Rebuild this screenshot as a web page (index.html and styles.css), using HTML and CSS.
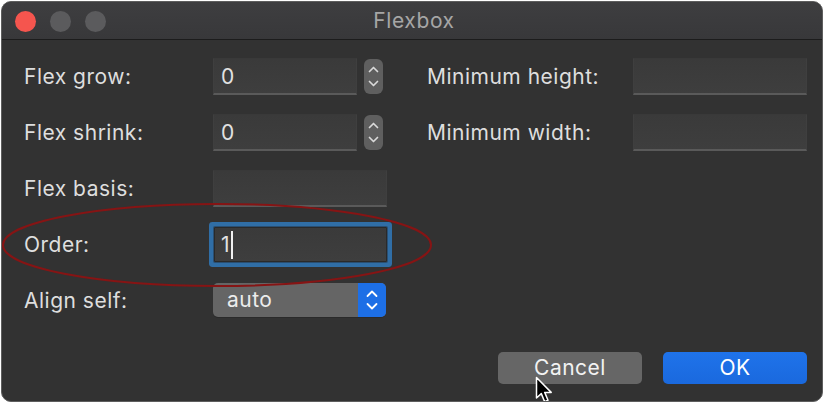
FILE: index.html
```html
<!DOCTYPE html>
<html>
<head>
<meta charset="utf-8">
<link rel="stylesheet" href="styles.css">
<title>Flexbox</title>
</head>
<body>
<div class="window">
  <div class="titlebar">
    <div class="lights">
      <span class="light red"></span>
      <span class="light gray"></span>
      <span class="light gray"></span>
    </div>
    <div class="title">Flexbox</div>
  </div>
  <div class="content">
    <div class="columns">
      <div class="form left">
        <label class="label">Flex grow:</label>
        <div class="field">
          <div class="input short">0</div>
          <div class="stepper">
            <svg width="19" height="35" viewBox="0 0 19 35"><path d="M5.5 12.5 L9.5 8.5 L13.5 12.5 M5.5 22.5 L9.5 26.5 L13.5 22.5" fill="none" stroke="#dadada" stroke-width="1.7" stroke-linecap="round" stroke-linejoin="round"/></svg>
          </div>
        </div>
        <label class="label">Flex shrink:</label>
        <div class="field">
          <div class="input short">0</div>
          <div class="stepper">
            <svg width="19" height="35" viewBox="0 0 19 35"><path d="M5.5 12.5 L9.5 8.5 L13.5 12.5 M5.5 22.5 L9.5 26.5 L13.5 22.5" fill="none" stroke="#dadada" stroke-width="1.7" stroke-linecap="round" stroke-linejoin="round"/></svg>
          </div>
        </div>
        <label class="label">Flex basis:</label>
        <div class="field">
          <div class="input wide"></div>
        </div>
        <label class="label">Order:</label>
        <div class="field">
          <div class="input wide focused">1<span class="caret"></span></div>
        </div>
        <label class="label">Align self:</label>
        <div class="field">
          <div class="select">
            <span class="select-value">auto</span>
            <span class="select-arrows">
              <svg width="28" height="34" viewBox="0 0 28 34"><path d="M9.5 13 L14 8.5 L18.5 13 M9.5 21 L14 25.5 L18.5 21" fill="none" stroke="#ffffff" stroke-width="1.8" stroke-linecap="round" stroke-linejoin="round"/></svg>
            </span>
          </div>
        </div>
      </div>
      <div class="form right">
        <label class="label">Minimum height:</label>
        <div class="field"><div class="input wide"></div></div>
        <label class="label">Minimum width:</label>
        <div class="field"><div class="input wide"></div></div>
      </div>
    </div>
    <div class="buttons">
      <button class="btn cancel">Cancel</button>
      <button class="btn ok">OK</button>
    </div>
  </div>
  <svg class="annotation" width="822" height="402" viewBox="0 0 822 402">
    <ellipse cx="216" cy="244" rx="214" ry="41" fill="none" stroke="#861414" stroke-width="2"/>
  </svg>
  <svg class="pointer" width="22" height="30" viewBox="0 0 22 30">
    <path d="M1.5 1.5 L1.5 22 L6.3 17.6 L9.6 25.6 L13 24.2 L9.7 16.4 L16.2 16.4 Z" fill="#000" stroke="#fff" stroke-width="1.5" stroke-linejoin="round"/>
  </svg>
</div>
</body>
</html>
```
FILE: styles.css
```css
* { box-sizing: border-box; }
html, body {
  margin: 0;
  padding: 0;
  background: #ffffff;
}
body {
  padding: 1px 0 0 1px;
  font-family: Inter, "Liberation Sans", sans-serif;
}
.window {
  position: relative;
  width: 822px;
  height: 401px;
  border-radius: 10px;
  overflow: hidden;
  background: #323232;
  border: 1px solid #5e5e5e;
  display: flex;
  flex-direction: column;
}
.titlebar {
  position: relative;
  height: 38px;
  flex: none;
  background: linear-gradient(#3e3e40, #38383a);
  border-bottom: 1px solid #1c1c1c;
  display: flex;
  align-items: center;
}
.lights {
  display: flex;
  gap: 14px;
  padding-left: 13px;
  margin-top: 1px;
}
.light {
  width: 21px;
  height: 21px;
  border-radius: 50%;
  display: block;
}
.light.red { background: #f5554e; }
.light.gray { background: #5b5b5d; }
.title {
  position: absolute;
  left: 0;
  right: 0;
  top: 0;
  bottom: 0;
  display: flex;
  align-items: center;
  justify-content: center;
  color: #a6a6a6;
  font-size: 21px;
  letter-spacing: 0.6px;
  padding-left: 4px;
}
.content {
  flex: 1;
  display: flex;
  flex-direction: column;
  padding: 18px 15px 17px 22px;
}
.columns {
  display: flex;
  flex: 1;
}
.form {
  display: grid;
  grid-auto-rows: 37px;
  row-gap: 19px;
  align-content: start;
}
.form.left {
  grid-template-columns: 189px 180px;
  width: 405px;
}
.form.right {
  grid-template-columns: 206px 174px;
}
.label {
  display: flex;
  align-items: center;
  color: #dedede;
  font-size: 21px;
  letter-spacing: 0.5px;
  padding-bottom: 1px;
}
.field {
  display: flex;
  align-items: center;
  gap: 7px;
}
.input {
  height: 37px;
  background: linear-gradient(#3a3a3a, #3e3e3e);
  border: 1px solid #3f3f3f;
  border-top-color: #393939;
  border-bottom: 2px solid #5a5a5a;
  color: #e2e2e2;
  font-size: 21px;
  display: flex;
  align-items: center;
  padding-left: 7px;
}
.input.short { width: 144px; }
.input.wide { width: 174px; }
.input.focused {
  height: 35px;
  width: 173px;
  margin-left: 1px;
  border: 1px solid #2a2a2a;
  border-radius: 1px;
  box-shadow: 0 0 0 1px #2a4f72, 0 0 0 5px #306ea6;
  padding-left: 6px;
}
.caret {
  display: inline-block;
  width: 2px;
  height: 28px;
  background: #f0f0f0;
  margin-left: 1px;
}
.stepper {
  width: 19px;
  height: 35px;
  border-radius: 6px;
  background: #5f5f5f;
  display: flex;
}
.select {
  width: 173px;
  height: 34px;
  margin-top: -2px;
  border-radius: 5px;
  background: #656565;
  display: flex;
  align-items: center;
  overflow: hidden;
  box-shadow: 0 1px 0 #2a2a2a;
}
.select-value {
  flex: 1;
  color: #ececec;
  font-size: 21px;
  letter-spacing: 0.5px;
  padding-left: 14px;
  padding-bottom: 1px;
}
.select-arrows {
  width: 28px;
  height: 34px;
  background: #1d6fe6;
  display: flex;
}
.buttons {
  display: flex;
  justify-content: flex-end;
  gap: 21px;
}
.btn {
  width: 144px;
  height: 32px;
  border: none;
  border-radius: 5px;
  font-family: Inter, "Liberation Sans", sans-serif;
  font-size: 21px;
  letter-spacing: 0.5px;
  color: #f2f2f2;
  padding: 0 0 1px 0;
}
.btn.cancel { background: #666666; }
.btn.ok { background: linear-gradient(#1f73ea, #1a69de); color: #ffffff; }
.annotation {
  position: absolute;
  left: -1px;
  top: -1px;
  pointer-events: none;
}
.pointer {
  position: absolute;
  left: 533px;
  top: 374px;
}
```
